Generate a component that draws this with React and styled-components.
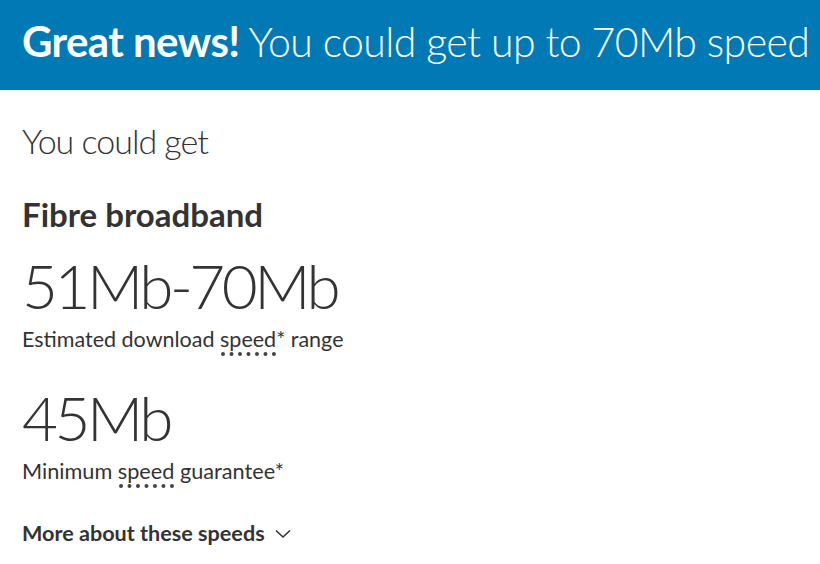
import React from "react";
import styled, { createGlobalStyle } from "styled-components";

const Global = createGlobalStyle`
  html, body { margin: 0; padding: 0; background: #fff; }
  body { font-family: "Lato", "Open Sans", sans-serif; color: #333; overflow: hidden; }
`;

const Banner = styled.header`
  background: #0079b4;
  height: 90px;
  box-sizing: border-box;
  display: flex;
  align-items: center;
  padding: 0 22px 7px;
  white-space: nowrap;
  overflow: hidden;
`;

const BannerText = styled.h1`
  margin: 0;
  color: #fff;
  font-size: 41px;
  font-weight: 300;
  letter-spacing: -0.6px;
  line-height: 1.2;
`;

const Strong = styled.b`
  font-weight: 700;
  font-size: 42px;
  letter-spacing: -0.6px;
`;

const Content = styled.main`
  padding: 31px 22px 0;
  display: flex;
  flex-direction: column;
`;

const Intro = styled.p`
  margin: 0;
  font-size: 34px;
  font-weight: 300;
  letter-spacing: -1px;
  color: #333;
  line-height: 1.2;
`;

const ProductTitle = styled.h2`
  margin: 33px 0 0;
  font-size: 33px;
  font-weight: 700;
  color: #333;
  line-height: 1.2;
`;

const BigSpeed = styled.div`
  font-size: 62px;
  font-weight: 300;
  letter-spacing: -3.5px;
  color: #333;
  line-height: 1.2;
  margin-top: ${(p) => p.$top}px;
`;

const Caption = styled.div`
  font-size: ${(p) => p.$size}px;
  color: #333;
  line-height: 1.2;
  margin-top: 4px;
`;

const Dotted = styled.span`
  position: relative;
  &::after {
    content: "";
    position: absolute;
    left: 1px;
    right: 0;
    bottom: -4px;
    border-bottom: 4px dotted #444;
  }
`;

const MoreLink = styled.button`
  margin-top: 37px;
  align-self: flex-start;
  display: flex;
  align-items: center;
  gap: 10px;
  padding: 0;
  border: none;
  background: none;
  font-family: inherit;
  font-size: 21.6px;
  font-weight: 700;
  color: #333;
  line-height: 1.2;
  cursor: pointer;
`;

const Chevron = () => (
  <svg width="16" height="11" viewBox="0 0 16 11" fill="none">
    <path d="M1 2.5 L8 9 L15 2.5" stroke="#333" strokeWidth="1.6" />
  </svg>
);

export default function App() {
  return (
    <>
      <Global />
      <Banner>
        <BannerText>
          <Strong>Great news!</Strong> You could get up to 70Mb speed
        </BannerText>
      </Banner>
      <Content>
        <Intro>You could get</Intro>
        <ProductTitle>Fibre broadband</ProductTitle>
        <BigSpeed $top={14}>51Mb-70Mb</BigSpeed>
        <Caption $size={21.5}>
          Estimated download <Dotted>speed</Dotted>* range
        </Caption>
        <BigSpeed $top={27}>45Mb</BigSpeed>
        <Caption $size={21.7}>
          Minimum <Dotted>speed</Dotted> guarantee*
        </Caption>
        <MoreLink>
          More about these speeds
          <Chevron />
        </MoreLink>
      </Content>
    </>
  );
}
